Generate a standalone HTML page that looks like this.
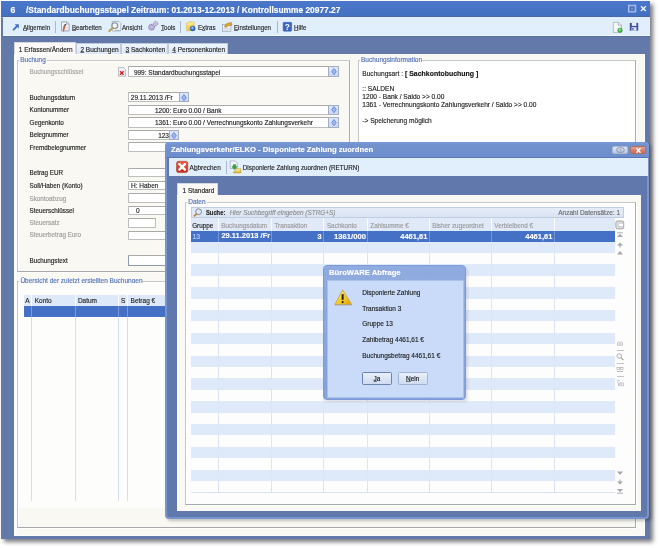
<!DOCTYPE html>
<html><head><meta charset="utf-8"><title>BüroWARE</title>
<style>
*{margin:0;padding:0;box-sizing:border-box}
html,body{width:659px;height:548px;overflow:hidden;background:#fff}
body{filter:blur(.3px);position:relative;font-family:"Liberation Sans", sans-serif;color:#222}
.a{position:absolute}
.t{position:absolute;white-space:nowrap;line-height:1}
u{text-decoration:underline;text-decoration-thickness:.5px;text-underline-offset:.4px;text-decoration-color:rgba(40,40,40,.6)}
.t{-webkit-text-stroke:.14px currentColor}
</style></head><body>
<div class="a" style="left:4.00px;top:4.00px;width:648.50px;height:538.00px;background:rgba(40,40,50,.62);filter:blur(2.2px);"></div>
<div class="a" style="left:1.20px;top:1.20px;width:648.80px;height:537.80px;background:#6279aa;"></div>
<div class="a" style="left:1.20px;top:1.20px;width:648.80px;height:14.40px;background:linear-gradient(#4a77ca,#4470c2);"></div>
<div class="a" style="left:1.20px;top:15.60px;width:648.80px;height:1.00px;background:#4a66a6;"></div>
<div class="a" style="left:1.20px;top:16.60px;width:648.80px;height:0.80px;background:#8ea3cc;"></div>
<div class="t" style="top:5.74px;font-size:8.7px;color:#fff;font-weight:bold;left:10.50px;">6</div>
<div class="t" style="top:5.74px;font-size:8.7px;color:#fff;transform:scaleX(0.963);transform-origin:left center;font-weight:bold;left:25.80px;">/Standardbuchungsstapel Zeitraum: 01.2013-12.2013 / Kontrollsumme 20977.27</div>
<svg class="a" style="left:0;top:0" width="659" height="16" viewBox="0 0 659 16"><rect x="628.6" y="5.2" width="7.2" height="6.8" fill="rgba(200,215,245,.35)" stroke="#b9caee" stroke-width=".9"/><rect x="630.6" y="7.1" width="3.2" height="3" fill="none" stroke="#3d5fae" stroke-width=".8"/><path d="M641 6.3 L645.8 10.9 M645.8 6.3 L641 10.9" stroke="#f2f6ff" stroke-width="1.4"/></svg>
<div class="a" style="left:2.70px;top:17.40px;width:647.30px;height:18.20px;background:#e1eefc;"></div>
<div class="a" style="left:2.70px;top:35.00px;width:647.30px;height:1.20px;background:#f1f8ff;"></div>
<div class="a" style="left:2.70px;top:36.20px;width:647.30px;height:1.00px;background:#586f9f;"></div>
<svg class="a" style="left:0;top:0" width="659" height="40" viewBox="0 0 659 40"><defs><linearGradient id="pen" x1="0" y1="0" x2="1" y2="0"><stop offset="0" stop-color="#e77a5c"/><stop offset="1" stop-color="#b8321c"/></linearGradient><linearGradient id="fold" x1="0" y1="0" x2="0" y2="1"><stop offset="0" stop-color="#fbe98a"/><stop offset="1" stop-color="#e9c23a"/></linearGradient><radialGradient id="bl" cx=".45" cy=".4" r=".6"><stop offset="0" stop-color="#bfe0ff"/><stop offset=".5" stop-color="#3b82e0"/><stop offset="1" stop-color="#1c4aa8"/></radialGradient><radialGradient id="gr" cx=".45" cy=".4" r=".6"><stop offset="0" stop-color="#9ef08a"/><stop offset="1" stop-color="#21962c"/></radialGradient></defs><path d="M13.6 29.6 L17.2 26" stroke="#4a6fc0" stroke-width="1.9" stroke-linecap="round"/><path d="M14.6 24.2 L18.9 24.2 L18.9 28.5 Z" fill="#4a6fc0"/><path d="M61.6 21.9 H67 L69.1 24 V31 H61.6 Z" fill="#f6f8fb" stroke="#7c879b" stroke-width=".7"/><path d="M66.5 21.9 V24 H69.1" fill="#dfe5ee" stroke="#7c879b" stroke-width=".5"/><path d="M63.9 31.8 L62.4 30.6 L63.6 25.8 L65.3 26.3 Z" fill="url(#pen)"/><path d="M63.6 25.6 L65.3 26.1 L66.6 24.6 L65.2 24 Z" fill="#3a3a3a"/><path d="M64.5 27.5 H68 M64.5 29.2 H68" stroke="#a9b3c4" stroke-width=".5"/><path d="M112.2 21.4 H118.8 L120.8 23.4 V31 H112.2 Z" fill="#eef2f7" stroke="#8c97aa" stroke-width=".6"/><circle cx="114.8" cy="25.6" r="2.9" fill="#f4f8fc" stroke="#7b889e" stroke-width="1.1"/><path d="M112.6 28 L109.3 31" stroke="#b9a052" stroke-width="2" stroke-linecap="round"/><path d="M115 30.3 H119.5" stroke="#8592a8" stroke-width=".6"/><circle cx="151.6" cy="27.2" r="2.9" fill="#cfc8ea" stroke="#8a82b4" stroke-width="1.2" stroke-dasharray="1.1 .7"/><circle cx="151.6" cy="27.2" r="1.9" fill="#c3bbe2" stroke="#9088bb" stroke-width=".5"/><circle cx="155.6" cy="23.6" r="2.2" fill="#d3cdec" stroke="#8a82b4" stroke-width="1" stroke-dasharray=".9 .6"/><circle cx="155.6" cy="23.6" r="1.2" fill="#bdb5df"/><path d="M186.2 23.2 L190.5 21.6 L194.3 22.4 L194 30.4 L186.8 31 Z" fill="url(#fold)" stroke="#d8b550" stroke-width=".5"/><path d="M187.2 24.5 L193.3 23.6" stroke="#fff6c0" stroke-width=".6"/><circle cx="192.7" cy="28.4" r="2.5" fill="url(#bl)" stroke="#1d4fa5" stroke-width=".4"/><rect x="222.3" y="24.6" width="8.6" height="6.6" fill="#eef3fa" stroke="#8a97ac" stroke-width=".6"/><path d="M223.2 28.6 H230 M223.2 30 H229" stroke="#b8c6dc" stroke-width=".5"/><path d="M224.3 26.8 C225 24.6 227.3 22.4 231.4 22.4 L232 25.3 C229 25.2 227.3 26 226.4 27.4 Z" fill="#d8a42e" stroke="#9b6a14" stroke-width=".4"/><rect x="283.1" y="22.3" width="8.6" height="9" rx="1" fill="#3c63bd" stroke="#2f51a0" stroke-width=".4"/><text x="287.4" y="30" font-family="Liberation Sans" font-weight="bold" font-size="8.3" fill="#fff" text-anchor="middle">?</text><path d="M613.3 22.3 H618.6 L621.4 25.1 V32.4 H613.3 Z" fill="#f4f5f7" stroke="#8f959e" stroke-width=".6"/><path d="M618.4 22.3 V25.2 H621.4" fill="#e2e5ea" stroke="#8f959e" stroke-width=".5"/><circle cx="620" cy="30.2" r="2.3" fill="url(#gr)" stroke="#1f7d28" stroke-width=".4"/><path d="M629.8 22.9 H638.2 V30.6 H629.8 Z" fill="#3e4c9e"/><rect x="631.8" y="22.9" width="4.6" height="3" fill="#eef1f8"/><rect x="631.5" y="27.2" width="5" height="3.4" fill="#dfe4f2"/><rect x="632.3" y="28" width="1.2" height="2" fill="#3e4c9e"/></svg>
<div class="t" style="top:24.27px;font-size:7.0px;color:#222;transform:scaleX(0.88);transform-origin:left center;left:23.20px;"><u>A</u>llgemein</div>
<div class="a" style="left:55.00px;top:20.50px;width:0.80px;height:12.50px;background:#a9b7cb;"></div>
<div class="t" style="top:24.27px;font-size:7.0px;color:#222;transform:scaleX(0.88);transform-origin:left center;left:72.40px;"><u>B</u>earbeiten</div>
<div class="t" style="top:24.27px;font-size:7.0px;color:#222;transform:scaleX(0.88);transform-origin:left center;left:121.90px;">Ans<u>i</u>cht</div>
<div class="t" style="top:24.27px;font-size:7.0px;color:#222;transform:scaleX(0.88);transform-origin:left center;left:161.00px;"><u>T</u>ools</div>
<div class="a" style="left:180.40px;top:20.50px;width:0.80px;height:12.50px;background:#a9b7cb;"></div>
<div class="t" style="top:24.27px;font-size:7.0px;color:#222;transform:scaleX(0.88);transform-origin:left center;left:197.50px;">E<u>x</u>tras</div>
<div class="t" style="top:24.27px;font-size:7.0px;color:#222;transform:scaleX(0.88);transform-origin:left center;left:233.70px;"><u>E</u>instellungen</div>
<div class="a" style="left:277.00px;top:20.50px;width:0.80px;height:12.50px;background:#a9b7cb;"></div>
<div class="t" style="top:24.27px;font-size:7.0px;color:#222;transform:scaleX(0.88);transform-origin:left center;left:294.20px;"><u>H</u>ilfe</div>
<div class="a" style="left:13.80px;top:42.30px;width:62.10px;height:13.70px;background:#fbfaf7;border:1px solid #d3d8df;border-bottom:none;"></div>
<div class="t" style="top:47.10px;font-size:6.5px;color:#222;left:18.80px;">1 Erfassen/Ändern</div>
<div class="a" style="left:75.90px;top:43.40px;width:45.20px;height:11.60px;background:linear-gradient(#eef5fd,#dce8f7);border:1px solid #bfcbdc;border-bottom:none;"></div>
<div class="t" style="top:47.10px;font-size:6.5px;color:#222;left:80.40px;"><u>2</u> Buchungen</div>
<div class="a" style="left:121.10px;top:43.40px;width:46.70px;height:11.60px;background:linear-gradient(#eef5fd,#dce8f7);border:1px solid #bfcbdc;border-bottom:none;"></div>
<div class="t" style="top:47.10px;font-size:6.5px;color:#222;left:125.60px;"><u>3</u> Sachkonten</div>
<div class="a" style="left:167.80px;top:43.40px;width:59.90px;height:11.60px;background:linear-gradient(#eef5fd,#dce8f7);border:1px solid #bfcbdc;border-bottom:none;"></div>
<div class="t" style="top:47.10px;font-size:6.5px;color:#222;left:172.30px;"><u>4</u> Personenkonten</div>
<div class="a" style="left:13.60px;top:54.00px;width:631.20px;height:481.80px;background:#f9f8f3;border-top:1.4px solid #fbfcfd;border-left:3.3px solid #fbfcfd;border-right:1.5px solid #fbfcfd;border-bottom:1.5px solid #fbfcfd;"></div>
<div class="a" style="left:16.90px;top:60.20px;width:333.10px;height:212.00px;border:1px solid #c4c7cc;border-right-color:#a9acb2;border-bottom-color:#a6a8ac;box-shadow:inset 1px 1px 0 #fff,1px 1px 0 #fff;"></div>
<div class="a" style="left:19.00px;top:59.20px;width:27.90px;height:3.00px;background:#f9f8f3;"></div>
<div class="t" style="top:56.70px;font-size:6.5px;color:#5374ba;left:20.20px;">Buchung</div>
<div class="t" style="top:68.77px;font-size:6.3px;color:#a2a2a2;left:29.50px;">Buchungsschlüssel</div>
<svg class="a" style="left:117.5px;top:67.3px" width="8" height="9.6" viewBox="0 0 8 9.6"><path d="M.4 .4 H5.4 L7.6 2.6 V9.2 H.4 Z" fill="#eef0f6" stroke="#8d94a6" stroke-width=".6"/><path d="M2 4.2 L5.6 7.8 M5.6 4.2 L2 7.8" stroke="#d42020" stroke-width="1.3"/></svg>
<div class="a" style="left:128.40px;top:66.30px;width:210.30px;height:11.00px;background:#fff;border:1px solid #bdbdbd;border-top-color:#a9a9a9;border-radius:1px;"></div>
<div class="a" style="left:328.40px;top:66.30px;width:10.30px;height:11.00px;background:linear-gradient(#dfe7f9,#cbd8f4);border:1px solid #a3aec2;"></div>
<svg class="a" style="left:330.55px;top:68.20px" width="6" height="7.2" viewBox="0 0 6 7.2"><path d="M3 .5 L5.3 3.6 L3 6.7 L.7 3.6 Z" fill="#9fb6ee" stroke="#5378d4" stroke-width=".7"/></svg>
<div class="t" style="top:69.70px;font-size:6.5px;color:#222;left:133.90px;">999: Standardbuchungsstapel</div>
<div class="t" style="top:95.07px;font-size:6.3px;color:#222;left:29.50px;">Buchungsdatum</div>
<div class="t" style="top:107.37px;font-size:6.3px;color:#222;left:29.50px;">Kontonummer</div>
<div class="t" style="top:119.77px;font-size:6.3px;color:#222;left:29.50px;">Gegenkonto</div>
<div class="t" style="top:132.37px;font-size:6.3px;color:#222;left:29.50px;">Belegnummer</div>
<div class="t" style="top:144.97px;font-size:6.3px;color:#222;left:29.50px;">Fremdbelegnummer</div>
<div class="a" style="left:128.40px;top:92.10px;width:60.80px;height:10.30px;background:#fff;border:1px solid #bdbdbd;border-top-color:#a9a9a9;border-radius:1px;"></div>
<div class="a" style="left:178.90px;top:92.10px;width:10.30px;height:10.30px;background:linear-gradient(#dfe7f9,#cbd8f4);border:1px solid #a3aec2;"></div>
<svg class="a" style="left:181.05px;top:93.65px" width="6" height="7.2" viewBox="0 0 6 7.2"><path d="M3 .5 L5.3 3.6 L3 6.7 L.7 3.6 Z" fill="#9fb6ee" stroke="#5378d4" stroke-width=".7"/></svg>
<div class="t" style="top:95.20px;font-size:6.5px;color:#222;left:130.80px;">29.11.2013 /Fr</div>
<div class="a" style="left:128.40px;top:104.50px;width:210.30px;height:10.50px;background:#fff;border:1px solid #bdbdbd;border-top-color:#a9a9a9;border-radius:1px;"></div>
<div class="a" style="left:328.40px;top:104.50px;width:10.30px;height:10.50px;background:linear-gradient(#dfe7f9,#cbd8f4);border:1px solid #a3aec2;"></div>
<svg class="a" style="left:330.55px;top:106.15px" width="6" height="7.2" viewBox="0 0 6 7.2"><path d="M3 .5 L5.3 3.6 L3 6.7 L.7 3.6 Z" fill="#9fb6ee" stroke="#5378d4" stroke-width=".7"/></svg>
<div class="t" style="top:107.60px;font-size:6.5px;color:#222;left:155.00px;">1200: Euro 0.00 / Bank</div>
<div class="a" style="left:128.40px;top:117.40px;width:210.30px;height:10.40px;background:#fff;border:1px solid #bdbdbd;border-top-color:#a9a9a9;border-radius:1px;"></div>
<div class="a" style="left:328.40px;top:117.40px;width:10.30px;height:10.40px;background:linear-gradient(#dfe7f9,#cbd8f4);border:1px solid #a3aec2;"></div>
<svg class="a" style="left:330.55px;top:119.00px" width="6" height="7.2" viewBox="0 0 6 7.2"><path d="M3 .5 L5.3 3.6 L3 6.7 L.7 3.6 Z" fill="#9fb6ee" stroke="#5378d4" stroke-width=".7"/></svg>
<div class="t" style="top:120.40px;font-size:6.5px;color:#222;left:155.00px;">1361: Euro 0.00 / Verrechnungskonto Zahlungsverkehr</div>
<div class="a" style="left:128.40px;top:130.00px;width:50.80px;height:10.20px;background:#fff;border:1px solid #bdbdbd;border-top-color:#a9a9a9;border-radius:1px;"></div>
<div class="a" style="left:168.90px;top:130.00px;width:10.30px;height:10.20px;background:linear-gradient(#dfe7f9,#cbd8f4);border:1px solid #a3aec2;"></div>
<svg class="a" style="left:171.05px;top:131.50px" width="6" height="7.2" viewBox="0 0 6 7.2"><path d="M3 .5 L5.3 3.6 L3 6.7 L.7 3.6 Z" fill="#9fb6ee" stroke="#5378d4" stroke-width=".7"/></svg>
<div class="t" style="top:133.00px;font-size:6.5px;color:#222;right:490.00px;">123</div>
<div class="a" style="left:128.40px;top:141.80px;width:210.30px;height:10.40px;background:#fff;border:1px solid #bdbdbd;border-top-color:#a9a9a9;border-radius:1px;"></div>
<div class="t" style="top:170.17px;font-size:6.3px;color:#222;left:29.50px;">Betrag EUR</div>
<div class="t" style="top:182.77px;font-size:6.3px;color:#222;left:29.50px;">Soll/Haben (Konto)</div>
<div class="t" style="top:195.57px;font-size:6.3px;color:#9a9a9a;left:29.50px;">Skontoabzug</div>
<div class="t" style="top:207.77px;font-size:6.3px;color:#222;left:29.50px;">Steuerschlüssel</div>
<div class="t" style="top:220.17px;font-size:6.3px;color:#9a9a9a;left:29.50px;">Steuersatz</div>
<div class="t" style="top:232.47px;font-size:6.3px;color:#9a9a9a;left:29.50px;">Steuerbetrag Euro</div>
<div class="t" style="top:258.47px;font-size:6.3px;color:#222;left:29.50px;">Buchungstext</div>
<div class="a" style="left:128.40px;top:167.80px;width:210.30px;height:9.60px;background:#fff;border:1px solid #bdbdbd;border-top-color:#a9a9a9;border-radius:1px;"></div>
<div class="a" style="left:128.40px;top:180.60px;width:210.30px;height:9.70px;background:#fff;border:1px solid #bdbdbd;border-top-color:#a9a9a9;border-radius:1px;"></div>
<div class="t" style="top:183.30px;font-size:6.5px;color:#222;left:131.00px;">H: Haben</div>
<div class="a" style="left:128.40px;top:193.00px;width:210.30px;height:9.60px;background:#fff;border:1px solid #bdbdbd;border-top-color:#a9a9a9;border-radius:1px;"></div>
<div class="a" style="left:128.40px;top:205.50px;width:210.30px;height:9.60px;background:#fff;border:1px solid #bdbdbd;border-top-color:#a9a9a9;border-radius:1px;"></div>
<div class="t" style="top:208.20px;font-size:6.5px;color:#222;left:136.00px;">0</div>
<div class="a" style="left:128.40px;top:217.80px;width:27.40px;height:10.20px;background:#fff;border:1px solid #bdbdbd;border-top-color:#a9a9a9;border-radius:1px;"></div>
<div class="a" style="left:128.40px;top:230.60px;width:210.30px;height:9.60px;background:#fff;border:1px solid #bdbdbd;border-top-color:#a9a9a9;border-radius:1px;"></div>
<div class="a" style="left:128.40px;top:255.20px;width:210.30px;height:11.20px;background:#fff;border:1px solid #8d9bb0;border-top-color:#a9a9a9;border-radius:1px;"></div>
<div class="a" style="left:357.80px;top:60.20px;width:277.80px;height:212.00px;border:1px solid #c4c7cc;border-right-color:#a9acb2;border-bottom-color:#a6a8ac;box-shadow:inset 1px 1px 0 #fff,1px 1px 0 #fff;background:#fff;"></div>
<div class="a" style="left:359.80px;top:59.20px;width:61.90px;height:3.00px;background:#f9f8f3;"></div>
<div class="t" style="top:56.70px;font-size:6.5px;color:#5374ba;left:361.00px;">Buchungsinformation</div>
<div class="t" style="top:71.21px;font-size:6.6px;color:#222;left:362.30px;">Buchungsart : </div>
<div class="t" style="top:70.92px;font-size:6.95px;color:#111;font-weight:bold;left:405.00px;">[ Sachkontobuchung ]</div>
<div class="t" style="top:85.81px;font-size:6.6px;color:#222;left:362.30px;">:: SALDEN</div>
<div class="t" style="top:94.11px;font-size:6.6px;color:#222;left:362.30px;">1200 - Bank / Saldo &gt;&gt; 0.00</div>
<div class="t" style="top:102.34px;font-size:6.57px;color:#222;left:362.30px;">1361 - Verrechnungskonto Zahlungsverkehr / Saldo &gt;&gt; 0.00</div>
<div class="t" style="top:117.81px;font-size:6.6px;color:#222;left:362.30px;">-&gt; Speicherung möglich</div>
<div class="a" style="left:16.90px;top:280.80px;width:618.90px;height:247.40px;border:1px solid #c4c7cc;border-right-color:#a9acb2;border-bottom-color:#a6a8ac;box-shadow:inset 1px 1px 0 #fff,1px 1px 0 #fff;"></div>
<div class="a" style="left:19.20px;top:279.80px;width:122.40px;height:3.00px;background:#f9f8f3;"></div>
<div class="t" style="top:278.40px;font-size:6.5px;color:#5374ba;left:20.40px;">Übersicht der zuletzt erstellten Buchungen</div>
<div class="a" style="left:18.00px;top:283.00px;width:617.00px;height:225.40px;background:#fdfdfb;"></div>
<div class="a" style="left:24.00px;top:295.30px;width:612.00px;height:10.70px;background:#dde9f8;"></div>
<div class="a" style="left:24.00px;top:306.00px;width:612.00px;height:10.60px;background:#4470c6;"></div>
<div class="a" style="left:31.00px;top:295.30px;width:0.80px;height:10.70px;background:#fbfdff;"></div>
<div class="a" style="left:31.00px;top:306.00px;width:0.80px;height:10.60px;background:#7c9ad8;"></div>
<div class="a" style="left:31.00px;top:316.60px;width:0.80px;height:184.00px;background:#d3def0;"></div>
<div class="a" style="left:74.50px;top:295.30px;width:0.80px;height:10.70px;background:#fbfdff;"></div>
<div class="a" style="left:74.50px;top:306.00px;width:0.80px;height:10.60px;background:#7c9ad8;"></div>
<div class="a" style="left:74.50px;top:316.60px;width:0.80px;height:184.00px;background:#d3def0;"></div>
<div class="a" style="left:118.20px;top:295.30px;width:0.80px;height:10.70px;background:#fbfdff;"></div>
<div class="a" style="left:118.20px;top:306.00px;width:0.80px;height:10.60px;background:#7c9ad8;"></div>
<div class="a" style="left:118.20px;top:316.60px;width:0.80px;height:184.00px;background:#d3def0;"></div>
<div class="a" style="left:127.10px;top:295.30px;width:0.80px;height:10.70px;background:#fbfdff;"></div>
<div class="a" style="left:127.10px;top:306.00px;width:0.80px;height:10.60px;background:#7c9ad8;"></div>
<div class="a" style="left:127.10px;top:316.60px;width:0.80px;height:184.00px;background:#d3def0;"></div>
<div class="t" style="top:298.10px;font-size:6.5px;color:#222;left:25.20px;">A</div>
<div class="t" style="top:298.10px;font-size:6.5px;color:#222;left:34.70px;">Konto</div>
<div class="t" style="top:298.10px;font-size:6.5px;color:#222;left:77.90px;">Datum</div>
<div class="t" style="top:298.10px;font-size:6.5px;color:#222;left:121.00px;">S</div>
<div class="t" style="top:298.10px;font-size:6.5px;color:#222;left:130.60px;">Betrag €</div>
<div class="a" style="left:166.50px;top:144.00px;width:485.20px;height:377.00px;background:rgba(0,0,0,.22);filter:blur(1.5px);border-radius:4px;"></div>
<div class="a" style="left:165.00px;top:142.00px;width:484.20px;height:377.00px;background:#6078ab;border-radius:4px;border:2.6px solid rgba(128,158,218,.78);"></div>
<div class="a" style="left:177.00px;top:195.20px;width:464.00px;height:315.40px;border:1.6px solid #fbfcfd;"></div>
<div class="a" style="left:165.00px;top:142.00px;width:484.20px;height:15.80px;background:linear-gradient(rgba(120,153,214,.84),rgba(110,144,208,.86));border-radius:4px 4px 0 0;"></div>
<div class="t" style="top:145.93px;font-size:8.0px;color:#fff;transform:scaleX(0.955);transform-origin:left center;font-weight:bold;left:171.00px;">Zahlungsverkehr/ELKO - Disponierte Zahlung zuordnen</div>
<div class="a" style="left:612.00px;top:146.00px;width:16.00px;height:8.20px;background:linear-gradient(#dde6f4,#b9c8e2);border-radius:1.5px;border:.6px solid #a9b9d6;"></div>
<svg class="a" style="left:615.5px;top:147px" width="9" height="6" viewBox="0 0 9 6"><rect x="1" y=".8" width="7" height="4.4" rx="1.4" fill="none" stroke="#6d7a8e" stroke-width=".7"/><path d="M3.5 3 H5.5" stroke="#6d7a8e" stroke-width=".8"/></svg>
<div class="a" style="left:630.00px;top:146.00px;width:16.00px;height:8.20px;background:linear-gradient(#e2a090,#c86a56);border-radius:1.5px;border:.6px solid #b3705f;"></div>
<svg class="a" style="left:634.5px;top:146.5px" width="7" height="7" viewBox="0 0 7 7"><path d="M1.5 1.3 L5.5 5.7 M5.5 1.3 L1.5 5.7" stroke="#fff" stroke-width="1.3"/></svg>
<div class="a" style="left:165.50px;top:156.60px;width:483.20px;height:1.20px;background:#5a78b8;"></div>
<div class="a" style="left:169.00px;top:158.40px;width:478.60px;height:17.80px;background:#e1eefc;"></div>
<svg class="a" style="left:0;top:150px" width="659" height="30" viewBox="0 150 659 30"><defs><linearGradient id="rq" x1="0" y1="0" x2="0" y2="1"><stop offset="0" stop-color="#f0604a"/><stop offset="1" stop-color="#c22a18"/></linearGradient><linearGradient id="tray" x1="0" y1="0" x2="0" y2="1"><stop offset="0" stop-color="#fff2a0"/><stop offset="1" stop-color="#e2b834"/></linearGradient></defs><rect x="176.5" y="161.3" width="11.3" height="11.3" rx="2" fill="url(#rq)" stroke="#a82a1a" stroke-width=".5"/><path d="M179.4 164.2 L184.9 169.7 M184.9 164.2 L179.4 169.7" stroke="#fff" stroke-width="2.4" stroke-linecap="round"/><path d="M230.2 161 H235.4 L237.2 162.8 V168.5 H230.2 Z" fill="#f2f6fb" stroke="#8d9ab0" stroke-width=".6"/><path d="M233.2 172.9 L236.2 168.8 H240.9 L240.9 172.9 Z" fill="url(#tray)" stroke="#b58c1c" stroke-width=".5"/><path d="M233.3 164.6 L235.6 164.6 L235.6 166.6 L237.2 166.6 L234.45 169.6 L231.7 166.6 L233.3 166.6 Z" fill="#2fa33a" stroke="#1b7a24" stroke-width=".35"/></svg>
<div class="t" style="top:164.64px;font-size:6.45px;color:#222;left:189.60px;">A<u>b</u>brechen</div>
<div class="a" style="left:225.60px;top:161.00px;width:0.80px;height:13.00px;background:#a9b7cb;"></div>
<div class="t" style="top:164.77px;font-size:6.3px;color:#222;left:242.80px;">Disponierte Zahlung zuordnen (RETURN)</div>
<div class="a" style="left:177.00px;top:183.20px;width:41.00px;height:12.80px;background:#fbfaf7;border:1px solid #d3d8df;border-bottom:none;"></div>
<div class="t" style="top:187.50px;font-size:6.5px;color:#222;left:182.60px;">1 Standard</div>
<div class="a" style="left:177.00px;top:195.20px;width:464.00px;height:315.40px;background:#f9f8f3;border-left:1.6px solid #fbfcfd;"></div>
<div class="a" style="left:185.40px;top:201.80px;width:450.40px;height:303.00px;border:1px solid #c4c7cc;border-right-color:#a9acb2;border-bottom-color:#a6a8ac;box-shadow:inset 1px 1px 0 #fff,1px 1px 0 #fff;background:#fdfdfd;"></div>
<div class="a" style="left:187.00px;top:200.80px;width:20.40px;height:3.00px;background:#f9f8f3;"></div>
<div class="t" style="top:199.40px;font-size:6.5px;color:#5374ba;left:188.20px;">Daten</div>
<div class="a" style="left:191.00px;top:207.00px;width:433.20px;height:10.80px;background:linear-gradient(#e6edf8,#dae4f3);border:1px solid #bfcde2;"></div>
<svg class="a" style="left:192.6px;top:208.3px" width="9.5" height="9" viewBox="0 0 9.5 9"><circle cx="5.6" cy="3.7" r="2.9" fill="#dfe9f5" stroke="#7d8a9e" stroke-width="1"/><path d="M3.6 5.8 L.9 8.4" stroke="#c0842e" stroke-width="1.7"/></svg>
<div class="t" style="top:210.37px;font-size:6.3px;color:#222;transform:scaleX(0.92);transform-origin:left center;font-weight:bold;left:205.60px;">Suche:</div>
<div class="t" style="top:210.28px;font-size:6.4px;color:#8d8d8d;font-style:italic;left:229.70px;">Hier Suchbegriff eingeben (STRG+S)</div>
<div class="t" style="top:210.20px;font-size:6.5px;color:#6a6a6a;right:39.00px;">Anzahl Datensätze: 1</div>
<div class="a" style="left:191.00px;top:217.80px;width:423.60px;height:13.00px;background:#dfe9f8;"></div>
<div class="a" style="left:217.80px;top:217.80px;width:0.90px;height:13.00px;background:#fbfdff;"></div>
<div class="a" style="left:217.80px;top:230.80px;width:0.90px;height:261.50px;background:#d9e4f5;"></div>
<div class="a" style="left:270.50px;top:217.80px;width:0.90px;height:13.00px;background:#fbfdff;"></div>
<div class="a" style="left:270.50px;top:230.80px;width:0.90px;height:261.50px;background:#d9e4f5;"></div>
<div class="a" style="left:323.30px;top:217.80px;width:0.90px;height:13.00px;background:#fbfdff;"></div>
<div class="a" style="left:323.30px;top:230.80px;width:0.90px;height:261.50px;background:#d9e4f5;"></div>
<div class="a" style="left:367.30px;top:217.80px;width:0.90px;height:13.00px;background:#fbfdff;"></div>
<div class="a" style="left:367.30px;top:230.80px;width:0.90px;height:261.50px;background:#d9e4f5;"></div>
<div class="a" style="left:429.10px;top:217.80px;width:0.90px;height:13.00px;background:#fbfdff;"></div>
<div class="a" style="left:429.10px;top:230.80px;width:0.90px;height:261.50px;background:#d9e4f5;"></div>
<div class="a" style="left:491.20px;top:217.80px;width:0.90px;height:13.00px;background:#fbfdff;"></div>
<div class="a" style="left:491.20px;top:230.80px;width:0.90px;height:261.50px;background:#d9e4f5;"></div>
<div class="a" style="left:554.10px;top:217.80px;width:0.90px;height:13.00px;background:#fbfdff;"></div>
<div class="a" style="left:554.10px;top:230.80px;width:0.90px;height:261.50px;background:#d9e4f5;"></div>
<div class="a" style="left:614.60px;top:217.80px;width:0.90px;height:13.00px;background:#fbfdff;"></div>
<div class="t" style="top:222.82px;font-size:6.35px;color:#222;left:192.20px;">Gruppe</div>
<div class="t" style="top:222.82px;font-size:6.35px;color:#9a9a9a;left:221.30px;">Buchungsdatum</div>
<div class="t" style="top:222.82px;font-size:6.35px;color:#9a9a9a;left:274.40px;">Transaktion</div>
<div class="t" style="top:222.82px;font-size:6.35px;color:#9a9a9a;left:326.90px;">Sachkonto</div>
<div class="t" style="top:222.82px;font-size:6.35px;color:#9a9a9a;left:370.30px;">Zahlsumme €</div>
<div class="t" style="top:222.82px;font-size:6.35px;color:#9a9a9a;left:432.20px;">Bisher zugeordnet</div>
<div class="t" style="top:222.82px;font-size:6.35px;color:#9a9a9a;left:494.30px;">Verbleibend €</div>
<div class="a" style="left:191.00px;top:230.80px;width:423.60px;height:10.80px;background:#4470c6;"></div>
<div class="a" style="left:217.80px;top:230.80px;width:0.90px;height:10.80px;background:#7795d6;"></div>
<div class="a" style="left:270.50px;top:230.80px;width:0.90px;height:10.80px;background:#7795d6;"></div>
<div class="a" style="left:323.30px;top:230.80px;width:0.90px;height:10.80px;background:#7795d6;"></div>
<div class="a" style="left:367.30px;top:230.80px;width:0.90px;height:10.80px;background:#7795d6;"></div>
<div class="a" style="left:429.10px;top:230.80px;width:0.90px;height:10.80px;background:#7795d6;"></div>
<div class="a" style="left:491.20px;top:230.80px;width:0.90px;height:10.80px;background:#7795d6;"></div>
<div class="a" style="left:554.10px;top:230.80px;width:0.90px;height:10.80px;background:#7795d6;"></div>
<div class="t" style="top:233.64px;font-size:6.8px;color:#b9d4ff;left:192.60px;">13</div>
<div class="a" style="left:219.2px;top:230.8px;width:51.6px;height:10.8px;overflow:hidden"><div class="t" style="left:2.2px;top:1.6px;font-size:7.5px;color:#fff;font-weight:bold">29.11.2013 /Fr</div></div>
<div class="t" style="top:233.12px;font-size:7.3px;color:#fff;font-weight:bold;right:337.40px;">3</div>
<div class="t" style="top:232.78px;font-size:7.7px;color:#fff;font-weight:bold;right:293.00px;">1361/000</div>
<div class="t" style="top:232.95px;font-size:7.5px;color:#fff;font-weight:bold;right:231.60px;">4461,61</div>
<div class="t" style="top:232.95px;font-size:7.5px;color:#fff;font-weight:bold;right:106.60px;">4461,61</div>
<div class="a" style="left:191.00px;top:241.60px;width:423.60px;height:11.40px;background:rgba(218,231,250,.9);"></div>
<div class="a" style="left:191.00px;top:264.39px;width:423.60px;height:11.40px;background:rgba(218,231,250,.9);"></div>
<div class="a" style="left:191.00px;top:287.18px;width:423.60px;height:11.40px;background:rgba(218,231,250,.9);"></div>
<div class="a" style="left:191.00px;top:309.97px;width:423.60px;height:11.40px;background:rgba(218,231,250,.9);"></div>
<div class="a" style="left:191.00px;top:332.76px;width:423.60px;height:11.40px;background:rgba(218,231,250,.9);"></div>
<div class="a" style="left:191.00px;top:355.55px;width:423.60px;height:11.40px;background:rgba(218,231,250,.9);"></div>
<div class="a" style="left:191.00px;top:378.35px;width:423.60px;height:11.40px;background:rgba(218,231,250,.9);"></div>
<div class="a" style="left:191.00px;top:401.14px;width:423.60px;height:11.40px;background:rgba(218,231,250,.9);"></div>
<div class="a" style="left:191.00px;top:423.93px;width:423.60px;height:11.40px;background:rgba(218,231,250,.9);"></div>
<div class="a" style="left:191.00px;top:446.72px;width:423.60px;height:11.40px;background:rgba(218,231,250,.9);"></div>
<div class="a" style="left:191.00px;top:469.51px;width:423.60px;height:11.40px;background:rgba(218,231,250,.9);"></div>
<div class="a" style="left:191.00px;top:492.00px;width:423.60px;height:0.60px;background:#d9e3f2;"></div>
<svg class="a" style="left:615px;top:220px" width="10" height="10" viewBox="0 0 10 10"><rect x=".9" y="1" width="7.8" height="7.8" rx="1.6" fill="#e4e4e4" stroke="#8e8e8e" stroke-width=".8"/><rect x="3.3" y="3.2" width="5.2" height="3.4" rx=".6" fill="#fff" stroke="#9a9a9a" stroke-width=".5"/></svg>
<svg class="a" style="left:616.30px;top:231.60px" width="8" height="6" viewBox="0 0 8 6"><path d="M1 .8 H7" stroke="#a8a8a8" stroke-width=".9"/><path d="M4 1.8 L7 5 H1 Z" fill="#a8a8a8"/></svg>
<svg class="a" style="left:616.30px;top:241.50px" width="8" height="6" viewBox="0 0 8 6"><path d="M4 .5 L7 3.5 H1 Z" fill="#a8a8a8"/><path d="M4 3 V5.6" stroke="#a8a8a8" stroke-width="1.2"/></svg>
<svg class="a" style="left:616.30px;top:249.80px" width="8" height="6" viewBox="0 0 8 6"><path d="M4 1 L7 4.6 H1 Z" fill="#a8a8a8"/></svg>
<svg class="a" style="left:616.30px;top:340.60px" width="8" height="6" viewBox="0 0 8 6"><path d="M2.2 .6 Q1 2.8 2.2 5 M5.8 .6 Q7 2.8 5.8 5 M4 .6 V5" fill="none" stroke="#a0a0a0" stroke-width=".8"/></svg>
<svg class="a" style="left:616.30px;top:353.40px" width="8" height="8" viewBox="0 0 8 8"><circle cx="3.2" cy="3" r="2.3" fill="#f4f4f4" stroke="#a5a5a5" stroke-width=".8"/><path d="M4.9 4.7 L7.4 7.2" stroke="#9a9a9a" stroke-width="1.2"/></svg>
<svg class="a" style="left:616.30px;top:367.20px" width="8" height="6" viewBox="0 0 8 6"><rect x="1" y=".6" width="2.6" height="2" fill="none" stroke="#a5a5a5" stroke-width=".6"/><rect x="4.4" y=".6" width="2.6" height="2" fill="none" stroke="#a5a5a5" stroke-width=".6"/><path d="M.8 4.4 H7.2" stroke="#a5a5a5" stroke-width=".8"/></svg>
<svg class="a" style="left:616.30px;top:380.10px" width="8" height="6.6" viewBox="0 0 8 6.6"><path d="M.8 .7 H3.8 M1 2 L2.6 3.8 V5.6 L3.4 5.6 V3.8 L5 2" fill="none" stroke="#a5a5a5" stroke-width=".7"/><rect x="5" y="3" width="2.4" height="2.8" fill="none" stroke="#a5a5a5" stroke-width=".6"/></svg>
<svg class="a" style="left:616.30px;top:470.30px" width="8" height="6" viewBox="0 0 8 6"><path d="M4 5 L7 1.4 H1 Z" fill="#a8a8a8"/></svg>
<svg class="a" style="left:616.30px;top:478.50px" width="8" height="6" viewBox="0 0 8 6"><path d="M4 5.5 L7 2.5 H1 Z" fill="#a8a8a8"/><path d="M4 .4 V3" stroke="#a8a8a8" stroke-width="1.2"/></svg>
<svg class="a" style="left:616.30px;top:488.30px" width="8" height="6" viewBox="0 0 8 6"><path d="M1 5.2 H7" stroke="#a8a8a8" stroke-width=".9"/><path d="M4 4.2 L7 1 H1 Z" fill="#a8a8a8"/></svg>
<div class="a" style="left:617.00px;top:350.20px;width:6.60px;height:0.50px;background:#c4c4c4;"></div>
<div class="a" style="left:617.00px;top:363.00px;width:6.60px;height:0.50px;background:#c4c4c4;"></div>
<div class="a" style="left:617.00px;top:376.30px;width:6.60px;height:0.50px;background:#c4c4c4;"></div>
<div class="a" style="left:324.30px;top:266.50px;width:143.40px;height:135.40px;background:rgba(0,0,0,.10);filter:blur(1.2px);border-radius:4px;"></div>
<div class="a" style="left:323.30px;top:265.00px;width:142.90px;height:135.40px;background:linear-gradient(rgba(136,166,222,.9),rgba(128,158,218,.95));border-radius:4px;border:1px solid #7d9ad8;"></div>
<div class="t" style="top:268.83px;font-size:8.0px;color:#fff;transform:scaleX(0.957);transform-origin:left center;font-weight:bold;left:329.40px;">BüroWARE Abfrage</div>
<div class="a" style="left:326.60px;top:280.40px;width:137.00px;height:117.60px;background:#c9dbf8;border:.6px solid #a8c0ea;"></div>
<svg class="a" style="left:333px;top:289px" width="19.5" height="17" viewBox="0 0 19.5 17"><defs><linearGradient id="wg" x1="0" y1="0" x2="1" y2="1"><stop offset="0" stop-color="#fff07a"/><stop offset=".6" stop-color="#f2c81e"/><stop offset="1" stop-color="#e39a10"/></linearGradient></defs><path d="M9.65 .9 L18.7 15.6 H1.8 Z" fill="url(#wg)" stroke="#c99a2a" stroke-width=".7" stroke-linejoin="round"/><path d="M2 15.9 H18.5" stroke="#9a9a9a" stroke-width=".7"/><path d="M9.65 5.2 V10.8" stroke="#1a1a1a" stroke-width="1.9"/><circle cx="9.65" cy="13.1" r="1.05" fill="#1a1a1a"/></svg>
<div class="t" style="top:290.10px;font-size:6.5px;color:#1e1e1e;left:362.20px;">Disponierte Zahlung</div>
<div class="t" style="top:305.90px;font-size:6.5px;color:#1e1e1e;left:362.20px;">Transaktion 3</div>
<div class="t" style="top:321.30px;font-size:6.5px;color:#1e1e1e;left:362.20px;">Gruppe 13</div>
<div class="t" style="top:337.10px;font-size:6.5px;color:#1e1e1e;left:362.20px;">Zahlbetrag 4461,61 €</div>
<div class="t" style="top:352.90px;font-size:6.5px;color:#1e1e1e;left:362.20px;">Buchungsbetrag 4461,61 €</div>
<div class="a" style="left:362.00px;top:372.00px;width:30.00px;height:13.40px;background:linear-gradient(#e9f0fa,#cddbf0);border:1px solid #6b83b0;border-radius:1.5px;"></div>
<div class="t" style="top:376.30px;font-size:6.5px;color:#111;left:377.00px;transform:translateX(-50%);"><u>J</u>a</div>
<div class="a" style="left:398.00px;top:372.00px;width:29.50px;height:13.40px;background:linear-gradient(#e9f0fa,#cddbf0);border:1px solid #a3b3cf;border-radius:1.5px;"></div>
<div class="t" style="top:376.30px;font-size:6.5px;color:#111;left:412.75px;transform:translateX(-50%);"><u>N</u>ein</div>
</body></html>
